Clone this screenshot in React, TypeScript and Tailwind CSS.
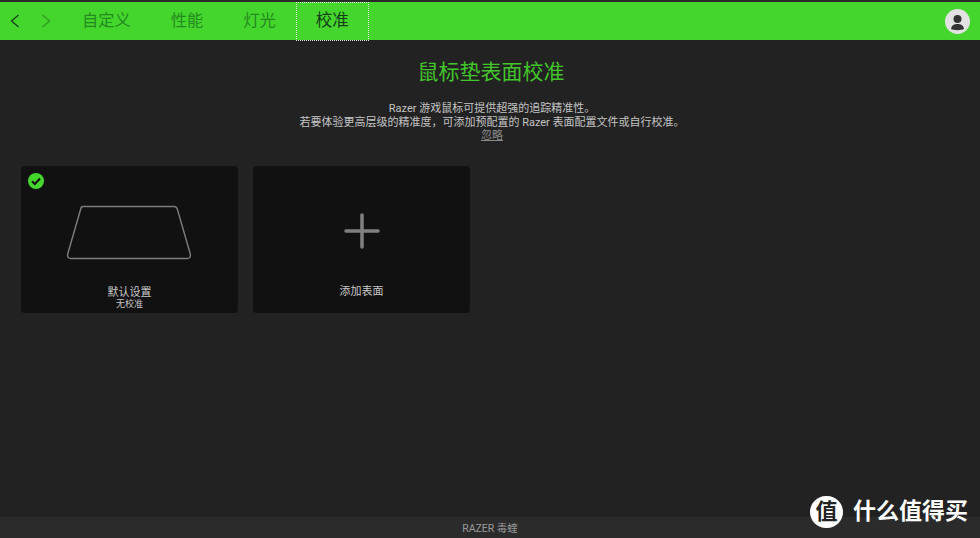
const font = "font-['Roboto','Noto_Sans_CJK_SC',sans-serif]";

const tabs = ['自定义', '性能', '灯光'];

const App = () => {
  return (
    <div className={`relative w-[980px] h-[538px] overflow-hidden flex flex-col bg-[#222222] ${font}`}>
      <div className="h-[2px] bg-[#2a2a2a]" />
      <header className="h-[38px] bg-[#44d62c] flex items-center">
        <div className="w-[62px] flex items-center shrink-0">
          <svg width="12" height="16" viewBox="0 0 12 16" className="ml-[9px]" fill="none" stroke="#16401a" strokeWidth="1.300">
            <path d="M9.500 2 L2.500 8 L9.500 14" />
          </svg>
          <svg width="12" height="16" viewBox="0 0 12 16" className="ml-[19px]" fill="none" stroke="#2f9a24" strokeWidth="1.300">
            <path d="M2.500 2 L9.500 8 L2.500 14" />
          </svg>
        </div>
        {tabs.map((t) => (
          <div key={t} className="px-5 text-[16.25px] text-[#258a20]">
            {t}
          </div>
        ))}
        <div className="w-[73px] h-[39px] mt-[1px] border border-dotted border-[#e4e4e4] flex items-center justify-center text-[16.5px] text-[#143d17]">
          校准
        </div>
        <div className="ml-auto mr-[10px] w-[25px] h-[25px] rounded-full bg-[#e2e2e2] flex items-center justify-center overflow-hidden">
          <svg width="25" height="25" viewBox="0 0 25 25" fill="#333333">
            <circle cx="12.500" cy="10" r="4" />
            <path d="M6 20 C6.500 16 9.500 15 12.500 15 C15.500 15 18.500 16 19 20 C16.500 21.500 8.500 21.500 6 20 Z" />
          </svg>
        </div>
      </header>

      <main className="flex-1 flex flex-col">
        <h1 className="mt-[19px] pl-[2px] text-center text-[21px] leading-[26px] font-normal text-[#42c42b]">鼠标垫表面校准</h1>
        <div className="mt-[17px] pl-[4px] text-center text-[11px] leading-[13.5px] text-[#c4c4c4]">
          <p>Razer 游戏鼠标可提供超强的追踪精准性。</p>
          <p>若要体验更高层级的精准度，可添加预配置的 Razer 表面配置文件或自行校准。</p>
          <p className="text-[#8a8a8a] underline">忽略</p>
        </div>

        <div className="mt-[23px] ml-[21px] flex gap-[15px]">
          <div className="relative w-[217px] h-[147px] rounded bg-[#111111] flex flex-col items-center">
            <svg width="20" height="20" viewBox="0 0 20 20" className="absolute left-[5px] top-[5px]">
              <circle cx="10" cy="10" r="8" fill="#44d62c" />
              <path d="M6 10.200 L8.800 13 L14 7.500" fill="none" stroke="#111111" strokeWidth="2" />
            </svg>
            <svg width="126" height="55" viewBox="0 0 126 55" className="mt-[39px] mr-[2px]" fill="none" stroke="#7d7d7d" strokeWidth="1.400">
              <path d="M17 1.500 H108 Q110.500 1.500 111.300 4 L124.300 49 Q125 53.500 121 53.500 H5 Q1 53.500 1.700 49 L14.700 4 Q15 1.500 17 1.500 Z" />
            </svg>
            <div className="mt-[26px] text-[11px] leading-[13px] text-[#c8c8c8]">默认设置</div>
            <div className="text-[9px] leading-[11px] text-[#c8c8c8]">无校准</div>
          </div>
          <div className="w-[217px] h-[147px] rounded bg-[#111111] flex flex-col items-center">
            <svg width="36" height="36" viewBox="0 0 36 36" className="mt-[47px]" stroke="#808080" strokeWidth="3.500" strokeLinecap="round">
              <path d="M18 2 V34 M2 18 H34" />
            </svg>
            <div className="mt-[36px] text-[11px] leading-[13px] text-[#c8c8c8]">添加表面</div>
          </div>
        </div>
      </main>

      <footer className="h-[21px] pt-[3px] bg-[#2b2b2b] flex items-center justify-center text-[10.5px] text-[#999999]">
        RAZER 毒蝰
      </footer>

      {/* watermark over the page */}
      <div className="absolute left-[810px] top-[496px] flex items-center">
        <div className="w-[33px] h-[32px] rounded-full bg-white flex items-center justify-center text-[22px] leading-none font-bold text-[#222222]">
          值
        </div>
        <span className="ml-[10px] text-[23px] leading-[32px] font-bold text-white whitespace-nowrap">什么值得买</span>
      </div>
    </div>
  );
};

export default App;
